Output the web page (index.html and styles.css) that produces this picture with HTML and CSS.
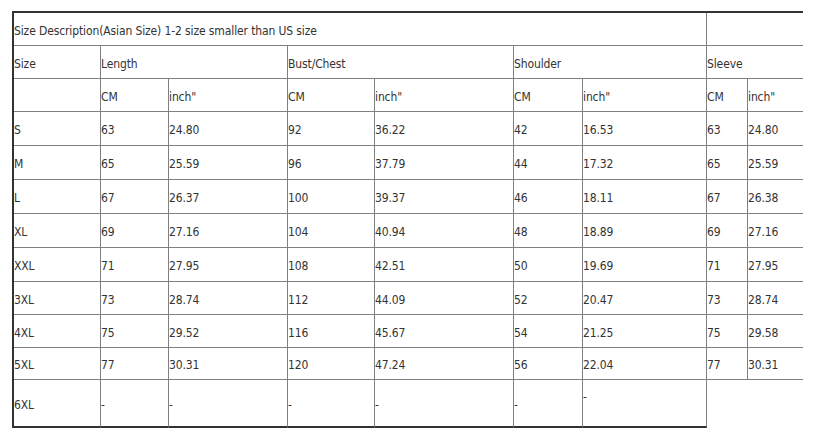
FILE: index.html
```html
<!DOCTYPE html>
<html>
<head>
<meta charset="utf-8">
<link rel="stylesheet" href="styles.css">
</head>
<body>
<div class="sheet">
  <div class="c title">Size Description(Asian Size) 1-2 size smaller than US size</div>
  <div class="c title-side"></div>

  <div class="c">Size</div>
  <div class="c span2">Length</div>
  <div class="c span2">Bust/Chest</div>
  <div class="c span2">Shoulder</div>
  <div class="c span2 last">Sleeve</div>

  <div class="c"></div>
  <div class="c">CM</div><div class="c">inch"</div>
  <div class="c">CM</div><div class="c">inch"</div>
  <div class="c">CM</div><div class="c">inch"</div>
  <div class="c">CM</div><div class="c last">inch"</div>

  <div class="c">S</div><div class="c">63</div><div class="c">24.80</div><div class="c">92</div><div class="c">36.22</div><div class="c">42</div><div class="c">16.53</div><div class="c">63</div><div class="c last">24.80</div>
  <div class="c">M</div><div class="c">65</div><div class="c">25.59</div><div class="c">96</div><div class="c">37.79</div><div class="c">44</div><div class="c">17.32</div><div class="c">65</div><div class="c last">25.59</div>
  <div class="c">L</div><div class="c">67</div><div class="c">26.37</div><div class="c">100</div><div class="c">39.37</div><div class="c">46</div><div class="c">18.11</div><div class="c">67</div><div class="c last">26.38</div>
  <div class="c">XL</div><div class="c">69</div><div class="c">27.16</div><div class="c">104</div><div class="c">40.94</div><div class="c">48</div><div class="c">18.89</div><div class="c">69</div><div class="c last">27.16</div>
  <div class="c">XXL</div><div class="c">71</div><div class="c">27.95</div><div class="c">108</div><div class="c">42.51</div><div class="c">50</div><div class="c">19.69</div><div class="c">71</div><div class="c last">27.95</div>
  <div class="c">3XL</div><div class="c">73</div><div class="c">28.74</div><div class="c">112</div><div class="c">44.09</div><div class="c">52</div><div class="c">20.47</div><div class="c">73</div><div class="c last">28.74</div>
  <div class="c">4XL</div><div class="c">75</div><div class="c">29.52</div><div class="c">116</div><div class="c">45.67</div><div class="c">54</div><div class="c">21.25</div><div class="c">75</div><div class="c last">29.58</div>
  <div class="c">5XL</div><div class="c">77</div><div class="c">30.31</div><div class="c">120</div><div class="c">47.24</div><div class="c">56</div><div class="c">22.04</div><div class="c">77</div><div class="c last">30.31</div>

  <div class="c end">6XL</div><div class="c end">-</div><div class="c end">-</div><div class="c end">-</div><div class="c end">-</div><div class="c end">-</div><div class="c end high">-</div>
</div>
</body>
</html>
```
FILE: styles.css
```css
html, body {
  margin: 0;
  padding: 0;
  background: #ffffff;
}

body {
  padding: 11px 0 0 12px;
  font-family: "DejaVu Sans Condensed", "DejaVu Sans", sans-serif;
  font-size: 12px;
  letter-spacing: -0.12px;
  color: #333333;
}

.sheet {
  display: grid;
  grid-template-columns: 87px 68px 119px 87px 139px 69px 124px 41px 55px;
  grid-template-rows: 33px 33px 33px 34px 34px 34px 34px 34px 33px 33px 32px 48px;
  width: 789px;
  border-left: 2px solid #333333;
  border-top: 2px solid #333333;
}

.c {
  box-sizing: border-box;
  display: flex;
  align-items: center;
  padding-top: 3px;
  border-right: 1px solid #808080;
  border-bottom: 1px solid #808080;
  white-space: nowrap;
  line-height: 14px;
}

.title {
  grid-column: span 7;
}

.title-side {
  grid-column: span 2;
  border-right: none;
}

.span2 {
  grid-column: span 2;
}

.last {
  border-right: none;
}

.end {
  border-bottom: 2px solid #333333;
}

.high {
  align-items: flex-start;
  padding-top: 10px;
}
```
